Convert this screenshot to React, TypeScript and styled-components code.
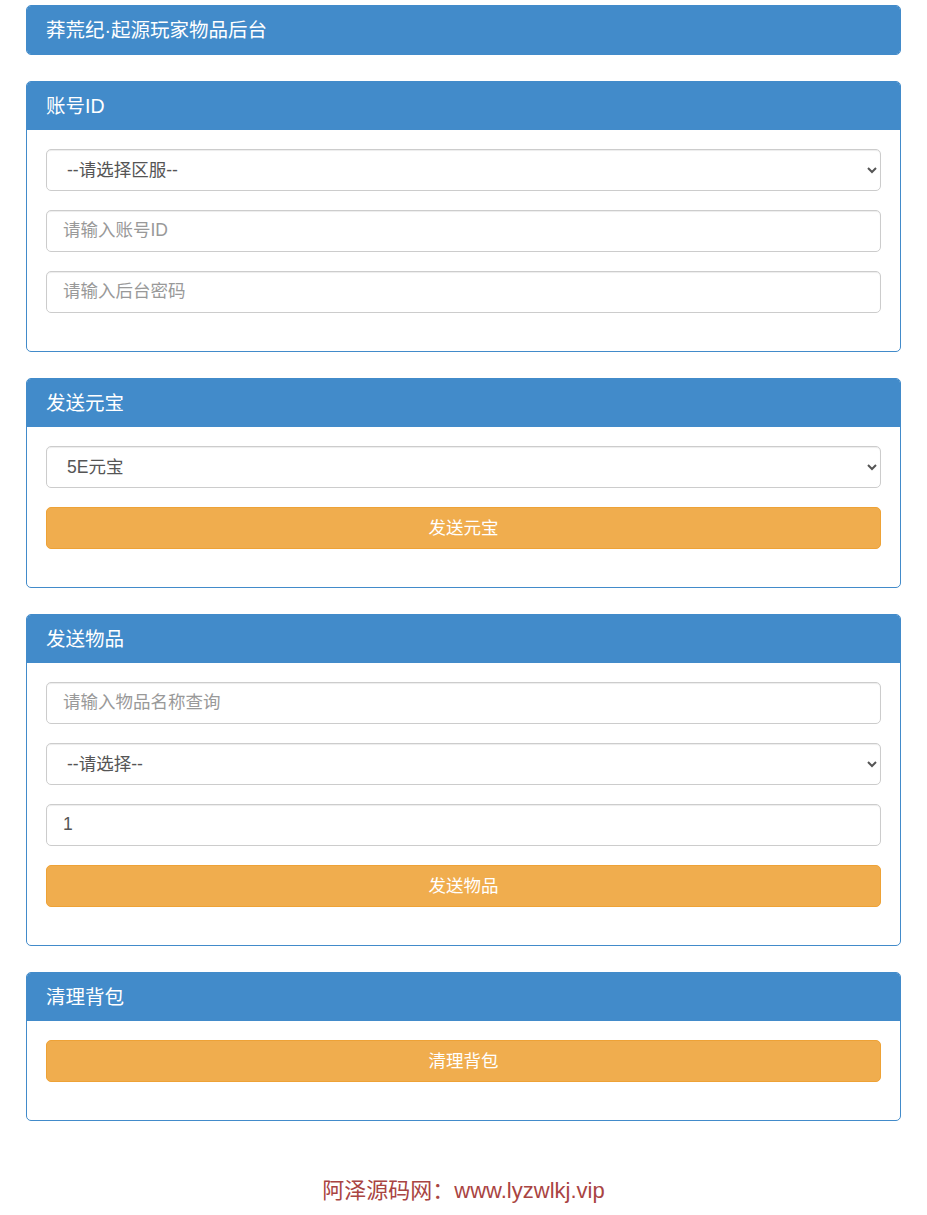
import React from 'react';
import styled, { createGlobalStyle } from 'styled-components';

const GlobalStyle = createGlobalStyle`
  body {
    margin: 0;
    background: #fff;
    font-family: "Liberation Sans", "Noto Sans CJK SC", Arial, sans-serif;
    color: #333;
  }
  * { box-sizing: border-box; }
`;

const Page = styled.div`
  padding: 5px 26px 20px 26px;
`;

const Panel = styled.div`
  border: 1px solid #428bca;
  border-radius: 5px;
  background: #fff;
  margin-bottom: 26px;
  overflow: hidden;
`;

const PanelHeading = styled.div`
  height: 48px;
  display: flex;
  align-items: center;
  padding: 0 19px 3px;
  background: #428bca;
  color: #fff;
  font-size: 19.5px;
`;

const PanelBody = styled.div`
  padding: 19px 19px 19px;
`;

const FormGroup = styled.div`
  margin-bottom: 19px;
`;

const Input = styled.input`
  display: block;
  width: 100%;
  height: 42px;
  padding: 0 16px 2px;
  font-size: 17.5px;
  font-family: inherit;
  color: #555;
  border: 1px solid #ccc;
  border-radius: 5px;
  box-shadow: inset 0 1px 1px rgba(0, 0, 0, 0.075);
  outline: none;
  &::placeholder { color: #999; }
`;

const Select = styled.select`
  display: block;
  width: 100%;
  height: 42px;
  padding: 0 12px 0 16px;
  font-size: 17.5px;
  font-family: inherit;
  color: #555;
  background: #fff;
  border: 1px solid #ccc;
  border-radius: 5px;
  box-shadow: inset 0 1px 1px rgba(0, 0, 0, 0.075);
  outline: none;
`;

const Button = styled.button`
  display: block;
  width: 100%;
  height: 42px;
  padding: 0 0 3px;
  font-size: 17.5px;
  font-family: inherit;
  color: #fff;
  background: #f0ad4e;
  border: 1px solid #eea236;
  border-radius: 5px;
  cursor: pointer;
`;

const Footer = styled.div`
  text-align: center;
  color: #a94442;
  font-size: 22px;
  padding-top: 25px;
`;

const App = () => {
  return (
    <Page>
      <GlobalStyle />
      <Panel>
        <PanelHeading>莽荒纪·起源玩家物品后台</PanelHeading>
      </Panel>

      <Panel>
        <PanelHeading>账号ID</PanelHeading>
        <PanelBody>
          <FormGroup>
            <Select defaultValue="">
              <option value="">--请选择区服--</option>
            </Select>
          </FormGroup>
          <FormGroup>
            <Input placeholder="请输入账号ID" />
          </FormGroup>
          <FormGroup>
            <Input placeholder="请输入后台密码" />
          </FormGroup>
        </PanelBody>
      </Panel>

      <Panel>
        <PanelHeading>发送元宝</PanelHeading>
        <PanelBody>
          <FormGroup>
            <Select defaultValue="5e">
              <option value="5e">5E元宝</option>
            </Select>
          </FormGroup>
          <FormGroup>
            <Button>发送元宝</Button>
          </FormGroup>
        </PanelBody>
      </Panel>

      <Panel>
        <PanelHeading>发送物品</PanelHeading>
        <PanelBody>
          <FormGroup>
            <Input placeholder="请输入物品名称查询" />
          </FormGroup>
          <FormGroup>
            <Select defaultValue="">
              <option value="">--请选择--</option>
            </Select>
          </FormGroup>
          <FormGroup>
            <Input defaultValue="1" />
          </FormGroup>
          <FormGroup>
            <Button>发送物品</Button>
          </FormGroup>
        </PanelBody>
      </Panel>

      <Panel>
        <PanelHeading>清理背包</PanelHeading>
        <PanelBody>
          <FormGroup>
            <Button>清理背包</Button>
          </FormGroup>
        </PanelBody>
      </Panel>

      <Footer>阿泽源码网：www.lyzwlkj.vip</Footer>
    </Page>
  );
};

export default App;
